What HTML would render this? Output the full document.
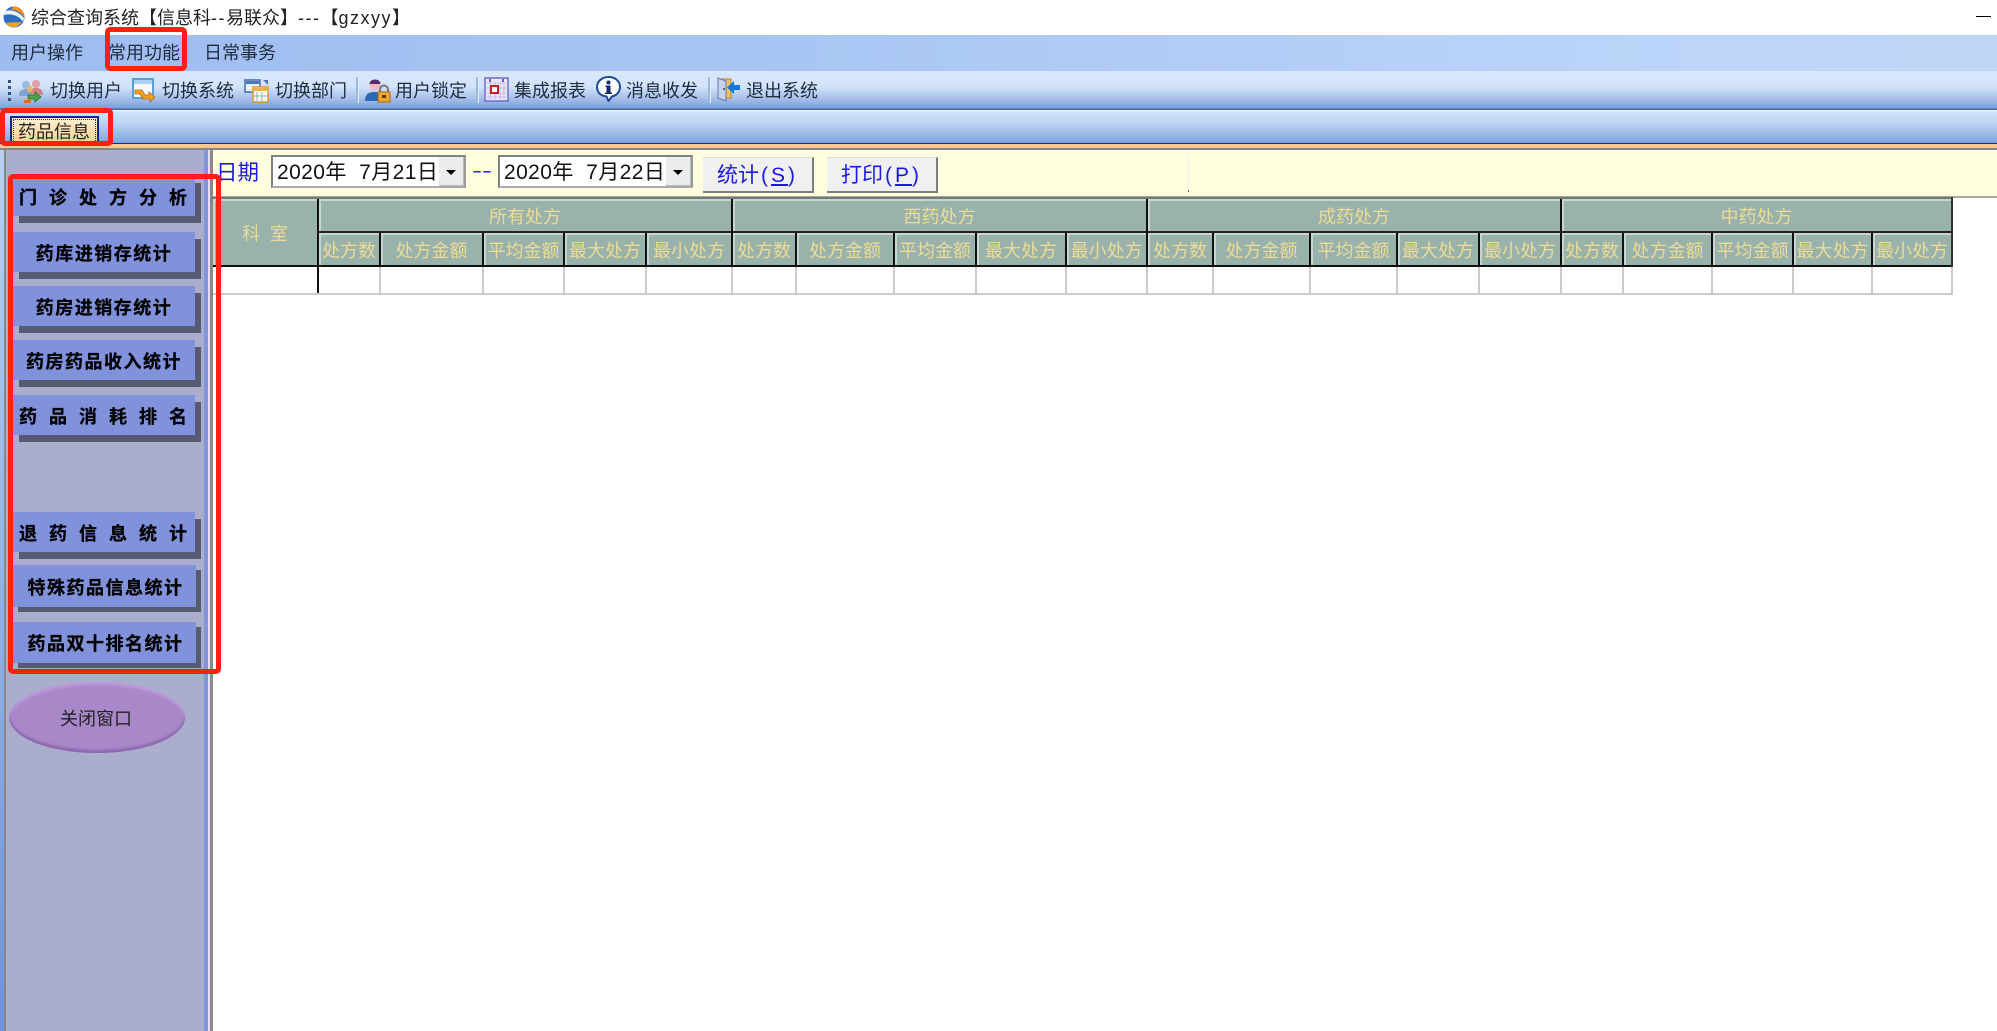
<!DOCTYPE html>
<html lang="zh"><head><meta charset="utf-8"><title>综合查询系统</title>
<style>
html,body{margin:0;padding:0;background:#fff;width:1997px;height:1031px;overflow:hidden}
#w{position:relative;width:1997px;height:1031px;overflow:hidden;font-family:"Liberation Sans","Noto Sans CJK SC",sans-serif;font-size:18px;filter:blur(.35px)}
#w div,#w svg{position:absolute}
.t{white-space:nowrap;line-height:24px;color:#1f2c3e}
.lat{letter-spacing:1.5px}
.s{width:2px;top:77px;height:26px;background:#9db7de;border-right:1px solid #e4eefb}
.red{border:5px solid #ff2010;border-radius:5px;box-sizing:border-box;z-index:5}
.b{background:#8192dc;box-shadow:6px 7px 0 #565a72;left:13px;width:182px;height:40px;line-height:44px;text-align:center;font-weight:bold;color:#000;white-space:nowrap;-webkit-text-stroke:.3px #000}
.wide{letter-spacing:12px;text-align:left;padding-left:6px;width:176px}
.nar{letter-spacing:1.5px}
.c{background:#99b2ac;color:#ecdc96;text-align:center;box-sizing:border-box;border-top:2px solid #c8d6d2;border-left:2px solid #c8d6d2;white-space:nowrap;padding-right:2px}
.g{top:199px;height:32px;line-height:32px}
.h{top:233px;height:32px;line-height:32px}
.v{background:#111;width:2px}
.l{background:#ccc}
.dp{background:#fff;box-sizing:border-box;border:2px solid #808080;border-right-color:#999;border-bottom-color:#aaa;top:155px;width:195px;height:33px;line-height:31px;padding-left:4px;white-space:pre;color:#111;font-size:21px;letter-spacing:.4px}
.db{background:#ececec;width:25px;height:29px;top:0;right:0;box-shadow:inset -1px -1px 0 #bbb}
.db i{position:absolute;left:7px;top:13px;border:5px solid transparent;border-top:5px solid #000;border-bottom:0}
.btn{background:#f0f0f0;top:157px;width:111px;height:36px;line-height:36px;text-align:center;color:#1a1ae0;font-size:21px;box-sizing:border-box;border-right:2px solid #7d7d7d;border-bottom:2px solid #7d7d7d;border-top:1px solid #ddd;white-space:nowrap}
.btn span{letter-spacing:3px;margin-left:2px}
u{text-decoration:underline}
</style></head><body><div id="w">

<!-- title bar -->
<svg style="left:3px;top:6px" width="22" height="22" viewBox="0 0 22 22"><circle cx="11" cy="11" r="10.5" fill="#2f6cc0"/><path d="M11 .5A10.500 10.500 0 0 1 21.500 11C18 7 14 4 8 3.500 9 2 10 1 11 .5Z" fill="#ee8f22"/><path d="M2 5C9 3 16 6 21 12 21 13 20.500 14.500 20 15.500 16 10 9 7 1 9 1 7.500 1.500 6 2 5Z" fill="#eef2f6"/><path d="M3 17C10 15.500 16 17 19 15.500 17 19 14 21.500 9 21.400 6.500 20.500 4.500 19 3 17Z" fill="#e9a624"/></svg>
<div class="t" style="left:31px;top:6px;color:#222">综合查询系统【信息科<span class="lat">--</span>易联众】<span class="lat">---</span>【<span class="lat">gzxyy</span>】</div>
<div style="left:1976px;top:16px;width:15px;height:1px;background:#000"></div>

<!-- menu bar -->
<div style="left:0;top:35px;width:1997px;height:36px;background:linear-gradient(90deg,#9fbcf0 0,#a9c5f3 40%,#bcd5f9 85%,#c0d6f6 100%)"></div>
<div class="t" style="left:11px;top:41px">用户操作</div>
<div class="t" style="left:108px;top:41px">常用功能</div>
<div class="t" style="left:204px;top:41px">日常事务</div>

<!-- toolbar -->
<div style="left:0;top:71px;width:1997px;height:39px;background:linear-gradient(180deg,#d8e8fc 0,#d2e3fb 40%,#a9c3ea 68%,#7ca0da 95%,#4f6fa8 96%,#4f6fa8 100%)"></div>
<div style="left:8px;top:80px;width:3px;height:3px;background:#33507f"></div>
<div style="left:8px;top:86px;width:3px;height:3px;background:#33507f"></div>
<div style="left:8px;top:92px;width:3px;height:3px;background:#33507f"></div>
<div style="left:8px;top:98px;width:3px;height:3px;background:#33507f"></div>

<svg style="left:18px;top:78px" width="26" height="26" viewBox="0 0 26 26"><circle cx="8" cy="7" r="4" fill="#9ab8de"/><path d="M1 18c0-6 3-7 7-7s6 2 6 7z" fill="#7da4d6"/><circle cx="18" cy="6" r="4" fill="#e0a0a0"/><path d="M12 16c0-6 3-6 6-6s7 1 7 7z" fill="#d08484"/><circle cx="12" cy="11" r="3" fill="#e8b860"/><path d="M6 25l7-0 0 -3 -7 0z" fill="#d07030"/><path d="M10 17h7v-3l6 5-6 5v-3h-7z" fill="#4aa84a" stroke="#2a6a2a" stroke-width=".8"/></svg>
<div class="t" style="left:50px;top:79px">切换用户</div>

<svg style="left:132px;top:78px" width="25" height="25" viewBox="0 0 25 25"><rect x="1" y="1" width="20" height="19" fill="#f4f8fd" stroke="#5aa0d8" stroke-width="2"/><rect x="2" y="2" width="18" height="4" fill="#a8d0f0"/><path d="M3 12h7l3 5h4v-3l6 5-5 5v-3h-7l-3-5H3z" fill="#f0a020" stroke="#b86a10" stroke-width=".8"/></svg>
<div class="t" style="left:162px;top:79px">切换系统</div>

<svg style="left:244px;top:78px" width="25" height="25" viewBox="0 0 25 25"><rect x="1" y="2" width="15" height="12" fill="#e8f0fa" stroke="#4a6ca8" stroke-width="1.500"/><rect x="2" y="3" width="13" height="3" fill="#4a78c0"/><rect x="9" y="9" width="15" height="15" fill="#fdfdf0" stroke="#d89a30" stroke-width="1.500"/><rect x="10" y="10" width="13" height="3" fill="#f0b040"/><path d="M13 14v9M18 14v9M10 18h13" stroke="#88a8d0"/><path d="M19 2l5 0 0 5z" fill="#4a78c0"/></svg>
<div class="t" style="left:275px;top:79px">切换部门</div>
<div class="s" style="left:356px"></div>

<svg style="left:365px;top:78px" width="26" height="25" viewBox="0 0 26 25"><circle cx="10" cy="7" r="5.500" fill="#eeb8c8"/><path d="M4.500 6c0-6 11-6 11 0z" fill="#5a2a70"/><path d="M0 23c0-8 5-9 10-9s7 2 8 4v5z" fill="#2a68b8"/><path d="M15 14v-2.500a4 4 0 0 1 8 0V14" fill="none" stroke="#777" stroke-width="2"/><rect x="13" y="14" width="12" height="10" fill="#f0a830" stroke="#a86a10"/><rect x="17" y="17" width="4" height="3" fill="#5a3a10"/></svg>
<div class="t" style="left:395px;top:79px">用户锁定</div>
<div class="s" style="left:476px"></div>

<svg style="left:484px;top:77px" width="25" height="25" viewBox="0 0 25 25"><rect x="1" y="1" width="23" height="23" fill="#ece8fb" stroke="#7068c8" stroke-width="1.500"/><path d="M1 6h23M6 6v18M11 6v18M16 6v18M20 6v18M1 11h23M1 16h23M1 20h23" stroke="#b8b0e8" stroke-width=".8"/><rect x="7" y="9" width="7" height="7" fill="#fff" stroke="#c02020" stroke-width="2"/><path d="M5 2h2v3H5zM18 2h2v3h-2z" fill="#6860c0"/></svg>
<div class="t" style="left:514px;top:79px">集成报表</div>

<svg style="left:596px;top:76px" width="25" height="26" viewBox="0 0 25 26"><path d="M12.500 1C19 1 24 5 24 11s-5 9-8 9.500l-3.500 4.500-2-4.500C5 20 1 16.500 1 11S6 1 12.500 1z" fill="#fff" stroke="#1f4a9a" stroke-width="2"/><circle cx="12.500" cy="6.500" r="2" fill="#102a70"/><path d="M9.500 9.500h5v7h1.500v1.500h-7v-1.500h1.500v-5.500h-1z" fill="#102a70"/></svg>
<div class="t" style="left:626px;top:79px">消息收发</div>
<div class="s" style="left:708px"></div>

<svg style="left:716px;top:76px" width="25" height="26" viewBox="0 0 25 26"><path d="M2 3h13v19H2z" fill="#f0c060" stroke="#b08030"/><path d="M2 2l8 3v20l-8-3z" fill="#c4d2ec" stroke="#6878a8"/><circle cx="8" cy="13" r="1" fill="#345"/><path d="M24 9h-6V5l-7 6.500 7 6.500v-4h6z" fill="#1078e0"/></svg>
<div class="t" style="left:746px;top:79px">退出系统</div>

<!-- tab bar -->
<div style="left:0;top:110px;width:1997px;height:3px;background:#dfeafc"></div>
<div style="left:0;top:112px;width:1997px;height:31px;background:linear-gradient(180deg,#d0e2fc 0,#bfd4f6 35%,#7ea4dc 100%)"></div>
<div style="left:0;top:143px;width:1997px;height:1px;background:#1a2a9c"></div>
<div style="left:0;top:144px;width:1997px;height:4px;background:#fdc88f"></div>
<div style="left:0;top:148px;width:1997px;height:2px;background:#858585"></div>
<div style="left:10px;top:116px;width:89px;height:27px;box-sizing:border-box;border:2px solid #20208c;border-bottom:0;background:linear-gradient(180deg,#fff0d0,#fccf90)"></div>
<div style="left:13px;top:119px;width:83px;height:24px;box-sizing:border-box;border:1px dotted #333;border-bottom:0"></div>
<div class="t" style="left:18px;top:120px;color:#222">药品信息</div>

<!-- side panel -->
<div style="left:0;top:150px;width:4px;height:881px;background:linear-gradient(180deg,#b8d0f2,#6a94dc)"></div>
<div style="left:4px;top:150px;width:2px;height:881px;background:#888"></div>
<div style="left:6px;top:150px;width:198px;height:881px;background:#aaaecc"></div>
<div style="left:204px;top:150px;width:4px;height:881px;background:#8494d8"></div>
<div style="left:208px;top:150px;width:2px;height:881px;background:#e8dcfa"></div>
<div style="left:210px;top:150px;width:3px;height:881px;background:#888"></div>

<div class="b wide" style="top:176px">门诊处方分析</div>
<div class="b nar" style="top:232px">药库进销存统计</div>
<div class="b nar" style="top:286px">药房进销存统计</div>
<div class="b nar" style="top:340px">药房药品收入统计</div>
<div class="b wide" style="top:395px">药品消耗排名</div>
<div class="b wide" style="top:512px">退药信息统计</div>
<div class="b nar" style="top:565px;width:183px;height:42px;line-height:46px;box-shadow:5px 5px 0 #565a72;text-indent:2px">特殊药品信息统计</div>
<div class="b nar" style="top:622px;width:183px;height:41px;line-height:45px;box-shadow:5px 5px 0 #565a72;text-indent:2px">药品双十排名统计</div>

<div style="left:9px;top:682px;width:176px;height:71px;border-radius:50%;background:#a888c8;box-shadow:inset 0 -3px 2px #8d68ae,inset 0 3px 2px #bc98dc"></div>
<div class="t" style="left:60px;top:707px;color:#222">关闭窗口</div>

<!-- date strip -->
<div style="left:213px;top:150px;width:1784px;height:46px;background:#ffffe0"></div>
<div style="left:213px;top:196px;width:1784px;height:2px;background:#a8a8a0"></div>
<div class="t" style="left:216px;top:161px;color:#1a1ae0;font-size:21.500px">日期</div>
<div class="dp" style="left:271px">2020年  7月21日<div class="db"><i></i></div></div>
<div class="t" style="left:472px;top:159px;color:#1a1ae0;font-size:30px;transform:scale(1,.6)">--</div>
<div class="dp" style="left:498px">2020年  7月22日<div class="db"><i></i></div></div>
<div class="btn" style="left:703px">统计<span>(<u>S</u>)</span></div>
<div class="btn" style="left:827px">打印<span>(<u>P</u>)</span></div>
<div style="left:1188px;top:156px;width:1px;height:36px;background:#eeeeee"></div>
<div style="left:1188px;top:190px;width:1px;height:2px;background:#666"></div>

<!-- table -->
<div style="left:-1px;top:0;width:1997px;height:1031px">
<div style="left:213px;top:197px;width:1741px;height:2px;background:#777"></div>
<div class="c" style="left:214px;top:199px;width:104px;height:66px;line-height:66px;letter-spacing:10px;text-indent:10px">科室</div>
<div class="c g" style="left:320px;width:412px">所有处方</div>
<div class="c g" style="left:734px;width:413px">西药处方</div>
<div class="c g" style="left:1149px;width:412px">成药处方</div>
<div class="c g" style="left:1563px;width:389px">中药处方</div>

<div class="c h" style="left:320px;width:60px">处方数</div>
<div class="c h" style="left:382px;width:101px">处方金额</div>
<div class="c h" style="left:485px;width:79px">平均金额</div>
<div class="c h" style="left:566px;width:80px">最大处方</div>
<div class="c h" style="left:648px;width:84px">最小处方</div>
<div class="c h" style="left:734px;width:62px">处方数</div>
<div class="c h" style="left:798px;width:96px">处方金额</div>
<div class="c h" style="left:896px;width:80px">平均金额</div>
<div class="c h" style="left:978px;width:88px">最大处方</div>
<div class="c h" style="left:1068px;width:79px">最小处方</div>
<div class="c h" style="left:1149px;width:64px">处方数</div>
<div class="c h" style="left:1215px;width:95px">处方金额</div>
<div class="c h" style="left:1312px;width:85px">平均金额</div>
<div class="c h" style="left:1399px;width:80px">最大处方</div>
<div class="c h" style="left:1481px;width:80px">最小处方</div>
<div class="c h" style="left:1563px;width:60px">处方数</div>
<div class="c h" style="left:1625px;width:87px">处方金额</div>
<div class="c h" style="left:1714px;width:79px">平均金额</div>
<div class="c h" style="left:1795px;width:77px">最大处方</div>
<div class="c h" style="left:1874px;width:78px">最小处方</div>

<!-- horizontal rules -->
<div style="left:318px;top:231px;width:1636px;height:2px;background:#222"></div>
<div style="left:214px;top:265px;width:1740px;height:2px;background:#111"></div>
<div class="l" style="left:214px;top:293px;width:1740px;height:2px"></div>

<!-- verticals: header -->
<div class="v" style="left:318px;top:199px;height:94px"></div>
<div class="v" style="left:732px;top:199px;height:66px"></div>
<div class="v" style="left:1147px;top:199px;height:66px"></div>
<div class="v" style="left:1561px;top:199px;height:66px"></div>
<div class="v" style="left:1952px;top:197px;height:70px;background:#333"></div>
<div class="v" style="left:380px;top:233px;height:32px"></div>
<div class="v" style="left:483px;top:233px;height:32px"></div>
<div class="v" style="left:564px;top:233px;height:32px"></div>
<div class="v" style="left:646px;top:233px;height:32px"></div>
<div class="v" style="left:796px;top:233px;height:32px"></div>
<div class="v" style="left:894px;top:233px;height:32px"></div>
<div class="v" style="left:976px;top:233px;height:32px"></div>
<div class="v" style="left:1066px;top:233px;height:32px"></div>
<div class="v" style="left:1213px;top:233px;height:32px"></div>
<div class="v" style="left:1310px;top:233px;height:32px"></div>
<div class="v" style="left:1397px;top:233px;height:32px"></div>
<div class="v" style="left:1479px;top:233px;height:32px"></div>
<div class="v" style="left:1623px;top:233px;height:32px"></div>
<div class="v" style="left:1712px;top:233px;height:32px"></div>
<div class="v" style="left:1793px;top:233px;height:32px"></div>
<div class="v" style="left:1872px;top:233px;height:32px"></div>

<!-- verticals: data row -->
<div class="l" style="left:380px;top:267px;width:2px;height:26px"></div>
<div class="l" style="left:483px;top:267px;width:2px;height:26px"></div>
<div class="l" style="left:564px;top:267px;width:2px;height:26px"></div>
<div class="l" style="left:646px;top:267px;width:2px;height:26px"></div>
<div class="l" style="left:732px;top:267px;width:2px;height:26px"></div>
<div class="l" style="left:796px;top:267px;width:2px;height:26px"></div>
<div class="l" style="left:894px;top:267px;width:2px;height:26px"></div>
<div class="l" style="left:976px;top:267px;width:2px;height:26px"></div>
<div class="l" style="left:1066px;top:267px;width:2px;height:26px"></div>
<div class="l" style="left:1147px;top:267px;width:2px;height:26px"></div>
<div class="l" style="left:1213px;top:267px;width:2px;height:26px"></div>
<div class="l" style="left:1310px;top:267px;width:2px;height:26px"></div>
<div class="l" style="left:1397px;top:267px;width:2px;height:26px"></div>
<div class="l" style="left:1479px;top:267px;width:2px;height:26px"></div>
<div class="l" style="left:1561px;top:267px;width:2px;height:26px"></div>
<div class="l" style="left:1623px;top:267px;width:2px;height:26px"></div>
<div class="l" style="left:1712px;top:267px;width:2px;height:26px"></div>
<div class="l" style="left:1793px;top:267px;width:2px;height:26px"></div>
<div class="l" style="left:1872px;top:267px;width:2px;height:26px"></div>
<div class="l" style="left:1952px;top:267px;width:2px;height:28px"></div>
</div>

<!-- red annotation boxes -->
<div class="red" style="left:105px;top:27px;width:82px;height:44px"></div>
<div class="red" style="left:0;top:108px;width:113px;height:38px"></div>
<div class="red" style="left:8px;top:174px;width:213px;height:500px"></div>

</div></body></html>
